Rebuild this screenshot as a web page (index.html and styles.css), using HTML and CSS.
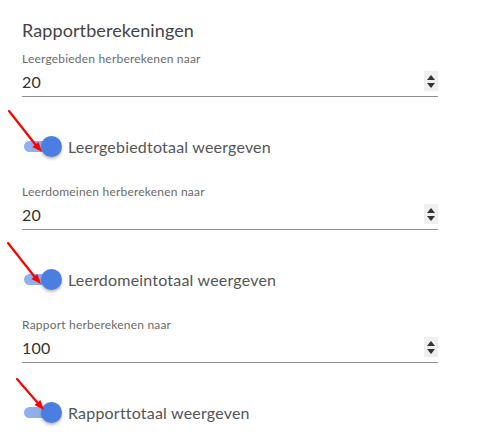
FILE: index.html
```html
<!DOCTYPE html>
<html>
<head>
<meta charset="utf-8">
<link rel="stylesheet" href="styles.css">
</head>
<body>
<div class="panel">
  <h2 class="title">Rapportberekeningen</h2>

  <div class="field">
    <div class="field-label">Leergebieden herberekenen naar</div>
    <div class="field-input">
      <span class="value">20</span>
      <span class="spinner"><i class="up"></i><i class="down"></i></span>
    </div>
  </div>
  <div class="toggle-row">
    <span class="toggle"><span class="track"></span><span class="knob"></span></span>
    <span class="toggle-label">Leergebiedtotaal weergeven</span>
  </div>

  <div class="field">
    <div class="field-label">Leerdomeinen herberekenen naar</div>
    <div class="field-input">
      <span class="value">20</span>
      <span class="spinner"><i class="up"></i><i class="down"></i></span>
    </div>
  </div>
  <div class="toggle-row">
    <span class="toggle"><span class="track"></span><span class="knob"></span></span>
    <span class="toggle-label">Leerdomeintotaal weergeven</span>
  </div>

  <div class="field">
    <div class="field-label">Rapport herberekenen naar</div>
    <div class="field-input">
      <span class="value">100</span>
      <span class="spinner"><i class="up"></i><i class="down"></i></span>
    </div>
  </div>
  <div class="toggle-row">
    <span class="toggle"><span class="track"></span><span class="knob"></span></span>
    <span class="toggle-label">Rapporttotaal weergeven</span>
  </div>
</div>

<svg class="arrow arrow-1" width="50" height="50" viewBox="0 0 50 50"><line x1="3" y1="3" x2="29.4" y2="36.5" stroke="#f00" stroke-width="2.2" stroke-linecap="round"/><path d="M36 44 L26.4 39.1 L32.4 33.9 Z" fill="#f00"/></svg>
<svg class="arrow arrow-2" width="50" height="50" viewBox="0 0 50 50"><line x1="3" y1="3" x2="29.4" y2="36.5" stroke="#f00" stroke-width="2.2" stroke-linecap="round"/><path d="M36 44 L26.4 39.1 L32.4 33.9 Z" fill="#f00"/></svg>
<svg class="arrow arrow-3" width="50" height="50" viewBox="0 0 50 50"><line x1="3" y1="3" x2="23.4" y2="26.5" stroke="#f00" stroke-width="2.2" stroke-linecap="round"/><path d="M30 34 L20.4 29.1 L26.4 23.9 Z" fill="#f00"/></svg>
</body>
</html>
```

FILE: styles.css
```css
html, body {
  margin: 0;
  padding: 0;
  background: #fff;
}
body {
  font-family: Lato, "Open Sans", sans-serif;
  position: relative;
  width: 484px;
  height: 445px;
  overflow: hidden;
}
.panel {
  padding: 17px 0 0 22px;
  width: 416px;
}
.title {
  margin: 0;
  font-size: 18px;
  font-weight: 400;
  line-height: 26px;
  color: #444;
  letter-spacing: 0.1px;
}
.field {
  margin-top: 28px;
}
.title + .field {
  margin-top: 9px;
}
.field-label {
  font-size: 12px;
  line-height: 14px;
  color: #6b6b6b;
  letter-spacing: 0.2px;
}
.field-input {
  display: flex;
  align-items: center;
  justify-content: space-between;
  height: 30px;
  border-bottom: 1px solid #8f8f8f;
}
.value {
  font-size: 16px;
  color: #333;
  letter-spacing: 0.2px;
}
.spinner {
  display: flex;
  flex-direction: column;
  align-items: center;
  justify-content: center;
  gap: 3px;
  width: 14px;
  height: 20px;
  background: #efefef;
}
.spinner i {
  display: block;
  width: 0;
  height: 0;
  border-left: 4px solid transparent;
  border-right: 4px solid transparent;
}
.spinner .up {
  border-bottom: 5px solid #333;
}
.spinner .down {
  border-top: 5px solid #333;
}
.toggle-row {
  display: flex;
  align-items: center;
  gap: 6px;
  height: 22px;
  margin-top: 38px;
  padding-left: 2px;
}
.toggle {
  position: relative;
  width: 38px;
  height: 21px;
  flex: none;
}
.track {
  position: absolute;
  left: 0;
  top: 5px;
  width: 32px;
  height: 11px;
  border-radius: 6px;
  background: #8fb0ec;
}
.knob {
  position: absolute;
  right: 0;
  top: 0;
  width: 21px;
  height: 21px;
  border-radius: 50%;
  background: #4a7fe1;
  box-shadow: 0 2px 3px rgba(0,0,0,0.28);
}
.toggle-label {
  font-size: 16px;
  color: #555;
  letter-spacing: 0.2px;
}
.arrow {
  position: absolute;
}
.arrow-1 { left: 6px; top: 108px; }
.arrow-2 { left: 5px; top: 240px; }
.arrow-3 { left: 14px; top: 376px; }
```
